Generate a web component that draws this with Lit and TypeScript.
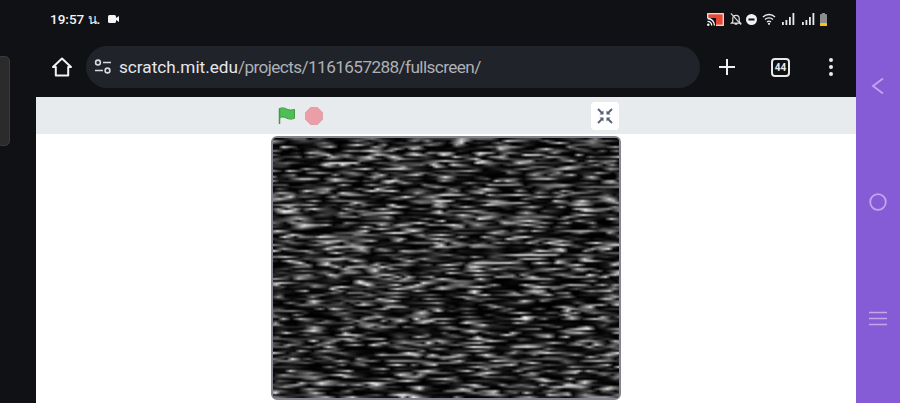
import { LitElement, html, css } from "lit";
import { customElement } from "lit/decorators.js";

@customElement("app-root")
export class AppRoot extends LitElement {
  static styles = css`
    :host { display: block; width: 900px; height: 403px; overflow: hidden; font-family: Roboto, "Noto Sans", sans-serif; }
    * { box-sizing: border-box; }
    .root { display: flex; width: 900px; height: 403px; background: #101114; position: relative; }
    .handle { position: absolute; left: -4px; top: 56px; width: 14px; height: 90px; background: #2b2b2c; border: 1px solid #3a3a3b; border-radius: 5px; }
    .main { width: 856px; display: flex; flex-direction: column; }
    .status { height: 46px; padding: 5px 29px 0 50px; display: flex; align-items: flex-start; justify-content: space-between; }
    .time { display: flex; align-items: center; gap: 8px; height: 28px; color: #f4f4f4; font-size: 13.5px; font-weight: 500; }
    .sys { display: flex; align-items: center; height: 28px; }
    .bar { height: 51px; display: flex; align-items: flex-start; padding-left: 50px; }
    .home { width: 24px; height: 24px; margin-top: 9px; flex: none; }
    .omni { margin-left: 12px; width: 614px; height: 42px; border-radius: 21px; background: #202329; display: flex; align-items: center; padding-left: 8px; gap: 7px; flex: none; }
    .url { font-size: 17.2px; color: #aeb1b7; white-space: nowrap; letter-spacing: -0.6px; }
    .url b { font-weight: 400; color: #e6e7ea; letter-spacing: 0; }
    .actions { display: flex; align-items: center; height: 42px; padding-left: 17px; }
    .plus { width: 20px; height: 20px; }
    .tabs { margin-left: 34px; width: 19px; height: 19px; border: 2px solid #e9e9e9; border-radius: 4px; color: #e9e9e9; font-size: 10px; font-weight: 700; display: flex; align-items: center; justify-content: center; }
    .dots { margin-left: 39px; display: flex; flex-direction: column; gap: 3px; }
    .dots i { width: 4px; height: 4px; border-radius: 50%; background: #ececec; display: block; }
    .page { flex: 1; margin-left: 36px; background: #fff; display: flex; flex-direction: column; min-height: 0; }
    .ctrl { height: 37px; background: #e8ebee; padding: 5px 237px 0 241px; display: flex; align-items: flex-start; justify-content: space-between; flex: none; }
    .left { display: flex; align-items: center; gap: 9px; height: 27px; padding-top: 0; }
    .flag { margin-left: 1px; }
    .stop { width: 18px; height: 18px; }
    .exit { width: 28px; height: 28px; background: #fff; border-radius: 4px; display: flex; align-items: center; justify-content: center; }
    .stagewrap { padding: 2px 0 0 235px; }
    .stage { width: 350px; height: 264px; border: 2px solid #85858f; border-radius: 6px; overflow: hidden; background: #000; }
    canvas { display: block; width: 346px; height: 260px; }
    .nav { width: 44px; background: #855cd6; flex: none; display: flex; flex-direction: column; align-items: center; }
    .nav svg { display: block; }
    .back { margin-top: 77px; }
    .circle { margin-top: 98px; }
    .menu { margin-top: 100px; }
  `;

  firstUpdated() {
    const c = this.renderRoot.querySelector("canvas") as HTMLCanvasElement;
    const ctx = c.getContext("2d")!;
    let s = 1161657288;
    const rnd = () => {
      s = (s + 0x6d2b79f5) | 0;
      let t = Math.imul(s ^ (s >>> 15), 1 | s);
      t = (t + Math.imul(t ^ (t >>> 7), 61 | t)) ^ t;
      return ((t ^ (t >>> 14)) >>> 0) / 4294967296;
    };
    const W = 346;
    const H = 130;
    const o = document.createElement("canvas");
    o.width = W;
    o.height = H;
    const octx = o.getContext("2d")!;
    const img = octx.createImageData(W, H);
    const val = () => Math.pow(rnd(), 3.6) * 240;
    for (let y = 0; y < H; y++) {
      let x0 = -Math.floor(rnd() * 10);
      let v0 = val();
      while (x0 < W) {
        const step = 5 + Math.floor(rnd() * 11);
        const v1 = val();
        for (let x = Math.max(0, x0); x < Math.min(W, x0 + step); x++) {
          const g = Math.round(v0 + ((v1 - v0) * (x - x0)) / step);
          const i = (y * W + x) * 4;
          img.data[i] = g;
          img.data[i + 1] = g;
          img.data[i + 2] = g;
          img.data[i + 3] = 255;
        }
        x0 += step;
        v0 = v1;
      }
    }
    octx.putImageData(img, 0, 0);
    ctx.imageSmoothingEnabled = true;
    ctx.imageSmoothingQuality = "medium";
    ctx.drawImage(o, 0, 0, 346, 260);
  }

  render() {
    return html`
      <div class="root">
        <div class="handle"></div>
        <div class="main">
          <div class="status">
            <div class="time">
              <span>19:57 น.</span>
              <svg width="11" height="8" viewBox="0 0 11 8"><rect width="8" height="8" rx="1.5" fill="#f4f4f4"/><path d="M8 3l3-2v6L8 5z" fill="#f4f4f4"/></svg>
            </div>
            <div class="sys">
              <svg width="17" height="13" viewBox="0 0 17 13"><rect x="0.700" y="0.700" width="15.600" height="11.600" fill="#e64a35" stroke="#eee" stroke-width="1.200"/><rect x="0" y="5" width="9" height="8" fill="#101114"/><path d="M.5 5.500a7 7 0 0 1 7 7M.5 8.300a4.200 4.200 0 0 1 4.200 4.200" stroke="#fff" stroke-width="1.300" fill="none"/><circle cx="1.300" cy="11.700" r="1.200" fill="#fff"/></svg>
              <svg style="margin-left:6px" width="12" height="14" viewBox="0 0 13 14"><path d="M3 10V6.500a3.500 3.500 0 0 1 7 0V10l1.500 1.500h-10z M5 12.500h3" fill="none" stroke="#ddd" stroke-width="1.300"/><path d="M1 1l11 12" stroke="#ddd" stroke-width="1.300"/></svg>
              <svg style="margin-left:4px" width="11" height="11" viewBox="0 0 11 11"><circle cx="5.500" cy="5.500" r="5.500" fill="#f2f2f2"/><rect x="2.500" y="4.500" width="6" height="2" fill="#101114"/></svg>
              <svg style="margin-left:5px" width="14" height="12" viewBox="0 0 14 12"><path d="M1 4a8.500 8.500 0 0 1 12 0M3 6.500a5.700 5.700 0 0 1 8 0M5 9a3 3 0 0 1 4 0" fill="none" stroke="#eee" stroke-width="1.400"/><circle cx="7" cy="10.800" r="1.100" fill="#eee"/></svg>
              <svg style="margin-left:6px" width="13" height="12" viewBox="0 0 13 12"><g fill="#e8e8e8"><rect x="0" y="9" width="1.800" height="3"/><rect x="3.500" y="7" width="1.800" height="5"/><rect x="7" y="4" width="1.800" height="8"/><rect x="10.500" y="0" width="1.800" height="12"/></g></svg>
              <svg style="margin-left:7px" width="13" height="12" viewBox="0 0 13 12"><g fill="#e8e8e8"><rect x="0" y="9" width="1.800" height="3"/><rect x="3.500" y="7" width="1.800" height="5"/><rect x="7" y="4" width="1.800" height="8"/><rect x="10.500" y="0" width="1.800" height="12"/></g></svg>
              <svg style="margin-left:5px" width="7" height="13" viewBox="0 0 7 13"><rect x="2" y="0" width="3" height="1.500" fill="#8c8c8c"/><rect x="0" y="1" width="7" height="12" rx="1" fill="#8c8c8c"/><rect x="0" y="10" width="7" height="3" rx="0.500" fill="#f5c518"/></svg>
            </div>
          </div>
          <div class="bar">
            <svg class="home" viewBox="0 0 24 24"><path d="M12 3.500L3 12h2.800v8.500h12.400V12H21z" fill="none" stroke="#f2f2f2" stroke-width="2" stroke-linejoin="round"/></svg>
            <div class="omni">
              <svg width="18" height="16" viewBox="0 0 18 16"><g fill="none" stroke="#d8d9dc" stroke-width="1.600"><circle cx="4" cy="3.500" r="2.400"/><circle cx="13.500" cy="11.500" r="2.400"/><path d="M9 3.500h8M1 11.500h8"/></g></svg>
              <div class="url"><b>scratch.mit.edu</b>/projects/1161657288/fullscreen/</div>
            </div>
            <div class="actions">
              <svg class="plus" viewBox="0 0 20 20"><path d="M10 2v16M2 10h16" stroke="#f0f0f0" stroke-width="2"/></svg>
              <div class="tabs">44</div>
              <div class="dots"><i></i><i></i><i></i></div>
            </div>
          </div>
          <div class="page">
            <div class="ctrl">
              <div class="left">
                <svg class="flag" width="18" height="18" viewBox="0 0 18 18"><path d="M1.500 17V1.500C4 .5 6 .8 8.500 2s5 1.300 8 .3v9c-3 1.200-5.500 1-8-.2s-4.500-1.400-6.100-.6" fill="#4cbf56" stroke="#45993d" stroke-width="1" stroke-linejoin="round"/><path d="M1.500 1.500V17" stroke="#45993d" stroke-width="1.500"/></svg>
                <svg class="stop" viewBox="0 0 18 18"><path d="M5.500 .5h7l5 5v7l-5 5h-7l-5-5v-7z" fill="#ec9ea6" stroke="#d99aa2" stroke-width=".8"/></svg>
              </div>
              <div class="exit">
                <svg width="16" height="16" viewBox="0 0 16 16"><g fill="none" stroke="#575e75" stroke-width="1.800"><path d="M1 1l4.500 4.500M15 1l-4.500 4.500M1 15l4.500-4.500M15 15l-4.500-4.500"/></g><g fill="#575e75"><path d="M2.500 6.500h4v-4zM13.500 6.500h-4v-4zM2.500 9.500h4v4zM13.500 9.500h-4v4z"/></g></svg>
              </div>
            </div>
            <div class="stagewrap"><div class="stage"><canvas width="346" height="260"></canvas></div></div>
          </div>
        </div>
        <div class="nav">
          <svg class="back" width="14" height="18" viewBox="0 0 14 18"><path d="M12 1.500L2 9l10 7.500" fill="none" stroke="#c3a6ec" stroke-width="1.800"/></svg>
          <svg class="circle" width="18" height="18" viewBox="0 0 18 18"><circle cx="9" cy="9" r="7.800" fill="none" stroke="#c3a6ec" stroke-width="1.800"/></svg>
          <svg class="menu" width="18" height="15" viewBox="0 0 18 15"><path d="M0 1.500h18M0 7.500h18M0 13.500h18" stroke="#c3a6ec" stroke-width="1.700"/></svg>
        </div>
      </div>
    `;
  }
}
